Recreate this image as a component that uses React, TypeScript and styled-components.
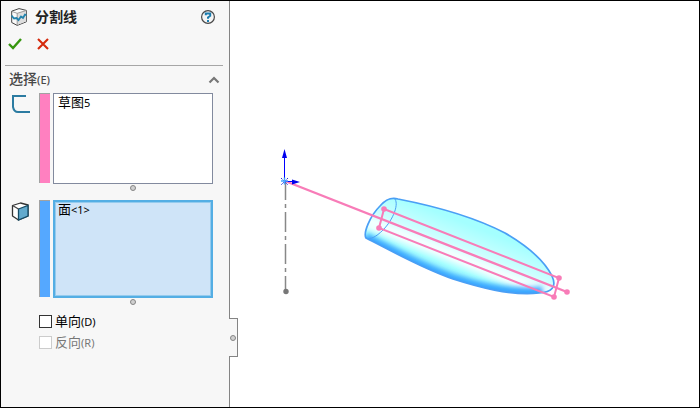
import React from "react";
import styled, { createGlobalStyle } from "styled-components";

const GlobalStyle = createGlobalStyle`
  *, *::before, *::after { box-sizing: border-box; }
  body { margin: 0; background: #fff; color: #000; font-family: "Noto Sans", "Noto Sans CJK SC", sans-serif; }
`;

const Window = styled.div`
  display: flex;
  min-height: 100vh;
  border: 1px solid #000;
`;

const Panel = styled.aside`
  position: relative;
  flex: none;
  width: 229px;
  padding: 6px 6px 0 4px;
  background: #f7f7f7;
  border-right: 1px solid #848484;
`;

const TitleBar = styled.header`
  display: flex;
  align-items: center;
  height: 20px;
  padding: 0 7px 0 6px;
`;

const Title = styled.h1`
  flex: 1;
  margin: 0 0 0 8px;
  font-size: 14px;
  line-height: 20px;
  font-weight: 700;
  color: #222;
`;

const IconButton = styled.button`
  display: flex;
  align-items: center;
  justify-content: center;
  width: 16px;
  height: 16px;
  padding: 0;
  border: 0;
  background: none;
`;

const Actions = styled.div`
  display: flex;
  align-items: center;
  gap: 12px;
  height: 39px;
  padding: 0 2px 4px;
  border-bottom: 1px solid #a6a6a6;
`;

const SectionHeader = styled.div`
  display: flex;
  align-items: center;
  justify-content: space-between;
  height: 27px;
  padding: 0 1px 0 4px;
`;

const SectionTitle = styled.h2`
  margin: 0;
  font-size: 14px;
  line-height: 20px;
  font-weight: 500;
  color: #484848;
`;

const Hotkey = styled.span`
  font-size: 11px;
  font-weight: 500;
`;

const FieldGroup = styled.div`
  & + & { margin-top: 3px; }
`;

const Field = styled.div`
  display: grid;
  grid-template-columns: 31px 11px 1fr;
  column-gap: 3px;
  padding-right: 10px;
`;

const FieldIcon = styled.div`
  padding: 1px 0 0 6px;
`;

const Swatch = styled.div<{ $color: string }>`
  margin: 0 0 1px;
  border: solid #a2a2a2;
  border-width: 1px 0 0 1px;
  background: ${(p) => p.$color};
`;

const ListBox = styled.ul<{ $active?: boolean }>`
  height: ${(p) => (p.$active ? 98 : 91)}px;
  margin: 0;
  padding: ${(p) => (p.$active ? "0 3px" : "1px 4px")};
  list-style: none;
  font-size: 13px;
  line-height: 14px;
  border: ${(p) => (p.$active ? "2px solid #54aee4" : "1px solid #828a9e")};
  background: ${(p) => (p.$active ? "#cfe4f8" : "#fff")};
  box-shadow: ${(p) => (p.$active ? "inset 0 0 0 1px #95cbee" : "none")};
`;

const Small = styled.span`
  font-size: 11px;
`;

const Grip = styled.div`
  display: flex;
  justify-content: center;
  height: 13px;
  padding: 1px 10px 0 48px;
`;

const Dot = styled.span`
  width: 6px;
  height: 6px;
  border: 1px solid #858585;
  border-radius: 50%;
  background: #d0d0d0;
`;

const Options = styled.div`
  display: flex;
  flex-direction: column;
  gap: 1px;
  padding-left: 34px;
`;

const Option = styled.label<{ $muted?: boolean }>`
  display: flex;
  align-items: center;
  gap: 3px;
  height: 20px;
  font-size: 13px;
  line-height: 20px;
  color: ${(p) => (p.$muted ? "#777" : "#000")};
`;

const Check = styled.input`
  appearance: none;
  width: 13px;
  height: 13px;
  margin: 0;
  border: 1px solid #333;
  background: #fff;
  &:disabled { border-color: #ccc; }
  &:checked { background: #333; box-shadow: inset 0 0 0 2px #fff; }
`;

const CollapseTab = styled.button`
  position: absolute;
  top: 317px;
  right: -9px;
  display: flex;
  align-items: center;
  justify-content: center;
  width: 9px;
  height: 39px;
  padding: 0;
  border: 1px solid #848484;
  border-left: 0;
  background: #f7f7f7;
`;

const Viewport = styled.main`
  flex: 1;
  min-width: 0;
  background: #fff;
`;

const Scene = styled.svg`
  display: block;
  width: 100%;
`;

const SplitLineIcon = () => (
  <svg width="16" height="18" viewBox="0 0 16 18" aria-hidden="true">
    <path d="M.7 3.2 8 .6l7.3 1.8v11.4L6.2 17.4.7 14.5z" fill="#fafafa" stroke="#444" strokeLinejoin="round" />
    <path d="M6.2 5.2 15 2.6v11L6.2 17z" fill="#dedede" />
    <path d="m1 3.5 5.2 1.8L15 2.6M6.2 5.3v11.8" fill="none" stroke="#888" strokeWidth=".8" />
    <path d="m.5 7.500 2.500 3 2.500-.5 2 2 2.500-3.500 2 1.500 2-3.500 1.500.5" fill="none" stroke="#2383ad" strokeWidth="1.8" />
  </svg>
);

const HelpIcon = () => (
  <svg width="14" height="14" viewBox="0 0 14 14" aria-hidden="true">
    <circle cx="7" cy="7" r="6.4" fill="#f5f5f5" stroke="#484848" strokeWidth="1.2" />
    <path d="M4.800 5.200V3.600h4.400v2.200L7 7.400v1.300M7 10v2" fill="none" stroke="#1c7daf" strokeWidth="2" />
  </svg>
);

const AcceptIcon = () => (
  <svg width="14" height="12" viewBox="0 0 14 12" aria-hidden="true">
    <path d="m1 6 4 4 8-9" fill="none" stroke="#36960f" strokeWidth="2.4" />
  </svg>
);

const CancelIcon = () => (
  <svg width="12" height="12" viewBox="0 0 12 12" aria-hidden="true">
    <path d="m1 1 10 10M11 1 1 11" stroke="#d52a0c" strokeWidth="2.1" />
  </svg>
);

const CollapseIcon = () => (
  <svg width="12" height="8" viewBox="0 0 12 8" aria-hidden="true">
    <path d="m1.500 6.500 4.500-4.500 4.500 4.500" fill="none" stroke="#777" strokeWidth="2.200" />
  </svg>
);

const SketchIcon = () => (
  <svg width="20" height="20" viewBox="0 0 20 20" aria-hidden="true">
    <path d="M15 3H2v11q1 5 5 5h12" transform="translate(0 -1)" fill="none" stroke="#2b7ba1" strokeWidth="2" />
  </svg>
);

const FaceIcon = () => (
  <svg width="18" height="20" viewBox="0 0 18 20" aria-hidden="true">
    <path d="m1.500 4.500 8-2.500 7.500 2v11l-9.500 4-6-4z" fill="#fff" stroke="#333" strokeWidth="1.300" strokeLinejoin="round" />
    <path d="m7.500 8 9.500-3.500v10.500l-9.500 4z" fill="#62aacd" stroke="#154b65" strokeWidth="1.300" />
    <path d="m1.500 4.500 6 3.500" stroke="#444" strokeWidth="1.300" />
  </svg>
);

const bodyOutline =
  "M366 238C363 233 370 216 380 206C386 199 391 197 398 199C439 207 478 219 505 233C529 247 545 262 552 276C557 287 552 292 539 293C510 296 478 287 453 279C419 267 390 250 366 238Z";

const ModelScene = () => (
  <Scene viewBox="230 1 469 405" role="img" aria-label="模型">
    <defs>
      <linearGradient id="body" gradientUnits="userSpaceOnUse" x1="470" y1="225" x2="449" y2="278">
        <stop offset="0" stopColor="#a4ffff" />
        <stop offset=".4" stopColor="#ccffff" />
        <stop offset=".58" stopColor="#f2ffff" />
        <stop offset=".68" stopColor="#eaffff" />
        <stop offset=".8" stopColor="#a8ffff" />
        <stop offset="1" stopColor="#7be4ff" />
      </linearGradient>
      <clipPath id="bodyClip"><path d={bodyOutline} /></clipPath>
      <filter id="shade" x="-10%" y="-20%" width="120%" height="140%"><feGaussianBlur stdDeviation="2.500" /></filter>
    </defs>
    <path d="M285.500 291V181" stroke="#888" strokeWidth="1.500" strokeDasharray="15 4 4 4 20 4 4 4 20 4 4 4 20 0" />
    <circle cx="286" cy="291.500" r="2.700" fill="#777" />
    <path d={bodyOutline} fill="url(#body)" />
    <g clipPath="url(#bodyClip)">
      <path d="M364 240C390 253 419 270 453 282C478 290 510 298 543 294" fill="none" stroke="#37a5ff" strokeWidth="15" filter="url(#shade)" />
    </g>
    <path d={bodyOutline} fill="none" stroke="#4a9ff5" strokeWidth="1.700" />
    <path d="M394 198C400 203 393 220 383 230C376 237 370 240 366 238" fill="none" stroke="#4a9ff5" />
    <g fill="none" stroke="#f87cb8" strokeWidth="2">
      <path d="M285 181 567 292" strokeWidth="2.400" />
      <path d="m384 209 175 69-5 19-175-69z" />
    </g>
    <g fill="#f87cb8">
      <circle cx="384" cy="209" r="2.800" />
      <circle cx="379" cy="228" r="2.800" />
      <circle cx="559" cy="278" r="2.800" />
      <circle cx="554" cy="297" r="2.800" />
      <circle cx="567" cy="292" r="2.800" />
    </g>
    <path d="M284.500 181V157M285 181.500h7" stroke="#00f" />
    <path d="m284.500 149 2.500 9h-5zM300 182l-8-2.500v5z" fill="#00e" />
    <path d="m281 178 7 7m0-7-7 7" stroke="#2730d8" strokeDasharray="2 1" />
    <path d="M281 181h7m-3.500-3.500v7" stroke="#4ba6ff" strokeWidth="1.500" />
  </Scene>
);

export default function App() {
  return (
    <>
      <GlobalStyle />
      <Window>
        <Panel>
          <TitleBar>
            <SplitLineIcon />
            <Title>分割线</Title>
            <IconButton aria-label="帮助"><HelpIcon /></IconButton>
          </TitleBar>
          <Actions>
            <IconButton aria-label="确定"><AcceptIcon /></IconButton>
            <IconButton aria-label="取消"><CancelIcon /></IconButton>
          </Actions>
          <SectionHeader>
            <SectionTitle>选择<Hotkey>(E)</Hotkey></SectionTitle>
            <IconButton aria-label="折叠"><CollapseIcon /></IconButton>
          </SectionHeader>
          <FieldGroup>
            <Field>
              <FieldIcon><SketchIcon /></FieldIcon>
              <Swatch $color="#ff80c0" />
              <ListBox role="listbox" aria-label="草图">
                <li role="option" aria-selected="false">草图<Small>5</Small></li>
              </ListBox>
            </Field>
            <Grip><Dot /></Grip>
          </FieldGroup>
          <FieldGroup>
            <Field>
              <FieldIcon><FaceIcon /></FieldIcon>
              <Swatch $color="#55a8ff" />
              <ListBox $active role="listbox" aria-label="面">
                <li role="option" aria-selected="false">面<Small>&lt;1&gt;</Small></li>
              </ListBox>
            </Field>
            <Grip><Dot /></Grip>
          </FieldGroup>
          <Options>
            <Option><Check type="checkbox" /><span>单向<Small>(D)</Small></span></Option>
            <Option $muted><Check type="checkbox" disabled /><span>反向<Small>(R)</Small></span></Option>
          </Options>
          <CollapseTab aria-label="折叠面板"><Dot /></CollapseTab>
        </Panel>
        <Viewport><ModelScene /></Viewport>
      </Window>
    </>
  );
}
